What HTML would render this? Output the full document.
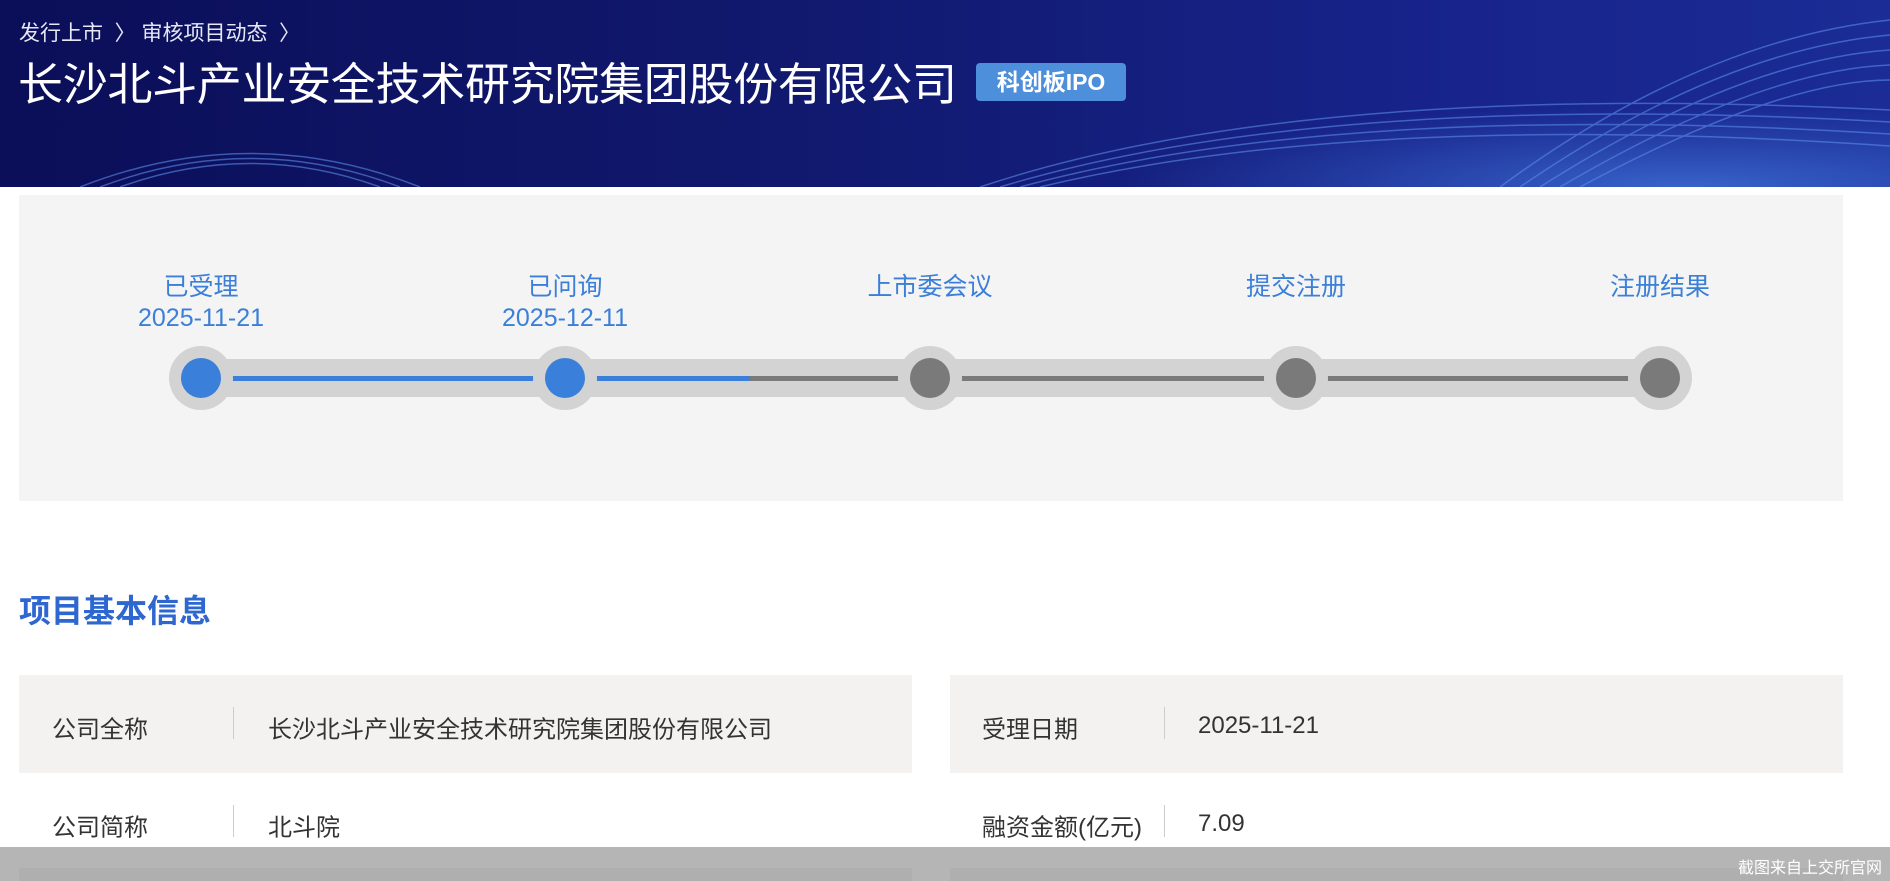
<!DOCTYPE html>
<html><head><meta charset="utf-8"><style>
*{margin:0;padding:0;box-sizing:border-box}
html,body{width:1890px;height:881px;overflow:hidden}
body{background:#fff;font-family:"Liberation Sans","Noto Sans CJK SC",sans-serif;position:relative}
.banner{position:absolute;left:0;top:0;width:1890px;height:187px;background:linear-gradient(90deg,#0b0e58 0%,#111a70 45%,#17238a 75%,#1b2c96 100%);overflow:hidden}
.bc{position:absolute;left:19px;top:17px;color:#e6e8f5;font-size:21px}
.title{position:absolute;left:18px;top:48px;color:#fff;font-size:45px;white-space:nowrap;letter-spacing:-0.3px}
.badge{position:absolute;left:976px;top:63px;width:150px;height:38px;background:#4d8fdb;border-radius:4px;color:#fff;font-size:23px;font-weight:bold;text-align:center;line-height:38px}
.panel{position:absolute;left:19px;top:195px;width:1824px;height:306px;background:#f4f4f4}
.lab{position:absolute;color:#3b7fd8;font-size:25px;text-align:center;width:200px;line-height:31px}
.track{position:absolute;left:201px;top:359px;width:1459px;height:38px;background:#d3d3d3}
.line{position:absolute;top:376px;height:5px}
.c{position:absolute;width:64px;height:64px;border-radius:50%;background:#d3d3d3;top:346px}
.c i{position:absolute;left:12px;top:12px;width:40px;height:40px;border-radius:50%;background:#7a7a7a}
.c.b i{background:#3a80da}
h2{position:absolute;left:19px;top:586px;font-size:32px;color:#2e67cf;font-weight:bold}
.cell{position:absolute;height:98px;background:#f3f2f1;font-size:24px;color:#333;overflow:hidden}
.cell span{position:absolute;top:50%;transform:translateY(-42%);white-space:nowrap}
.cell b{position:absolute;top:32px;width:1px;height:32px;background:#ccc}
.ov{position:absolute;left:0;top:847px;width:1890px;height:34px;background:rgba(120,120,120,0.55)}
.ov span{position:absolute;right:8px;top:7px;color:#fff;font-size:16px}
</style></head><body>
<div class="banner">
<svg width="1890" height="187" style="position:absolute;left:0;top:0">
<defs><radialGradient id="g" cx="80%" cy="100%" r="55%"><stop offset="0" stop-color="#3f72d8" stop-opacity=".8"/><stop offset="1" stop-color="#3a6ad0" stop-opacity="0"/></radialGradient></defs>
<rect x="850" y="40" width="1040" height="147" fill="url(#g)"/>
<g fill="none" stroke="#5a8ae8" stroke-width="1.5" opacity=".6">
<path d="M980 187 Q1300 80 1890 110"/><path d="M1000 187 Q1320 90 1890 122"/><path d="M1020 187 Q1340 100 1890 134"/><path d="M1040 187 Q1360 110 1890 146"/>
<path d="M1500 187 Q1700 40 1890 20"/><path d="M1520 187 Q1720 50 1890 35"/><path d="M1540 187 Q1740 60 1890 50"/><path d="M1560 187 Q1760 70 1890 65"/><path d="M1580 187 Q1780 80 1890 80"/>
<path d="M80 187 Q250 120 420 187"/><path d="M100 187 Q250 130 400 187"/><path d="M120 187 Q250 140 380 187"/>
</g></svg>
<div class="bc">发行上市 &nbsp;〉 审核项目动态 &nbsp;〉</div>
<div class="title">长沙北斗产业安全技术研究院集团股份有限公司</div>
<div class="badge">科创板IPO</div>
</div>
<div class="panel"></div>
<div class="lab" style="left:101px;top:272px">已受理<br>2025-11-21</div>
<div class="lab" style="left:465px;top:272px">已问询<br>2025-12-11</div>
<div class="lab" style="left:830px;top:272px">上市委会议</div>
<div class="lab" style="left:1196px;top:272px">提交注册</div>
<div class="lab" style="left:1560px;top:272px">注册结果</div>
<div class="track"></div>
<div class="line" style="left:201px;width:549px;background:#3a80da"></div>
<div class="line" style="left:750px;width:910px;background:#7a7a7a"></div>
<div class="c b" style="left:169px"><i></i></div>
<div class="c b" style="left:533px"><i></i></div>
<div class="c" style="left:898px"><i></i></div>
<div class="c" style="left:1264px"><i></i></div>
<div class="c" style="left:1628px"><i></i></div>
<h2>项目基本信息</h2>
<div class="cell" style="left:19px;top:675px;width:893px"><span style="left:33px">公司全称</span><b style="left:214px"></b><span style="left:249px">长沙北斗产业安全技术研究院集团股份有限公司</span></div>
<div class="cell" style="left:950px;top:675px;width:893px"><span style="left:32px">受理日期</span><b style="left:214px"></b><span style="left:248px">2025-11-21</span></div>
<div class="cell" style="left:19px;top:773px;width:893px;background:#fff"><span style="left:33px">公司简称</span><b style="left:214px"></b><span style="left:249px">北斗院</span></div>
<div class="cell" style="left:950px;top:773px;width:893px;background:#fff"><span style="left:32px">融资金额(亿元)</span><b style="left:214px"></b><span style="left:248px">7.09</span></div>
<div class="cell" style="left:19px;top:868px;width:893px;height:13px"></div>
<div class="cell" style="left:950px;top:868px;width:893px;height:13px"></div>
<div class="ov"><span>截图来自上交所官网</span></div>
</body></html>
